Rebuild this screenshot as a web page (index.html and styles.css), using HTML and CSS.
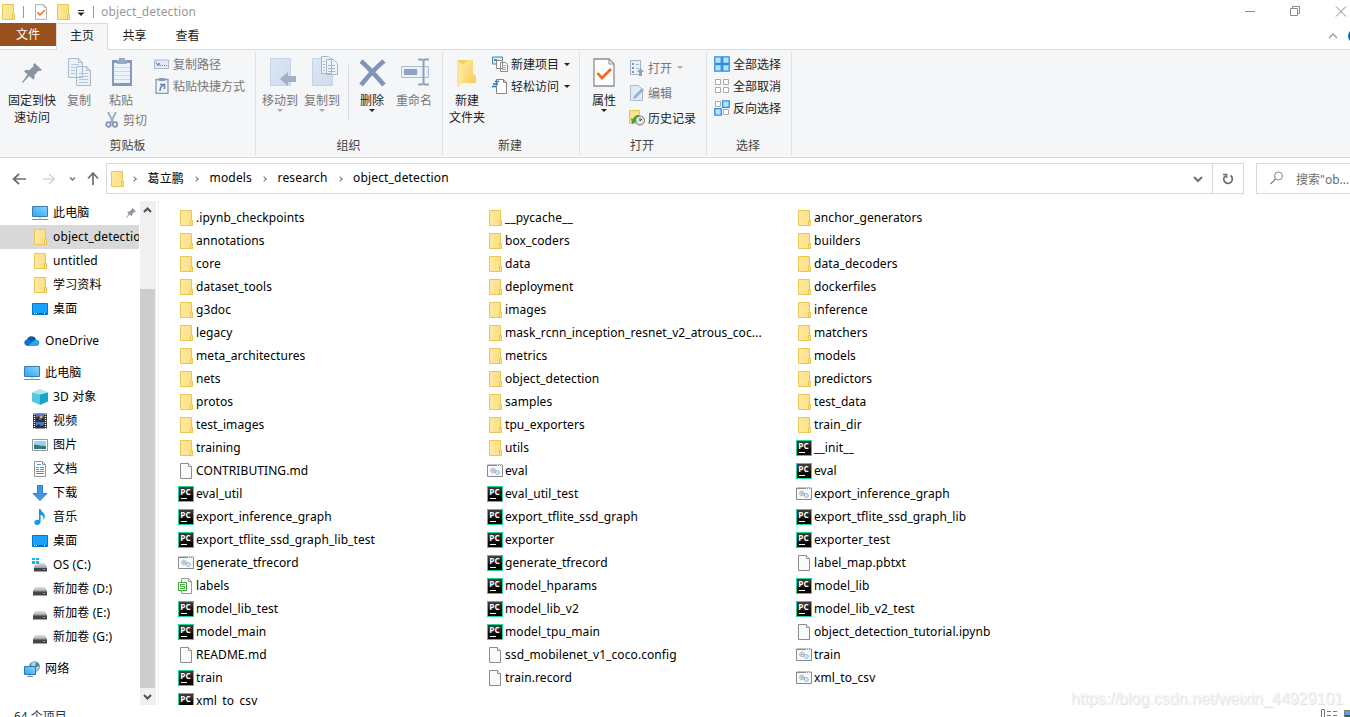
FILE: index.html
```html
<!DOCTYPE html>
<html lang="zh-CN">
<head>
    <meta charset="UTF-8">
    <meta name="viewport" content="width=device-width, initial-scale=1.0">
    <title>object_detection</title>
    <link rel="stylesheet" href="styles.css">
</head>
<body>
    <!-- Icon definitions -->
    <svg class="defs" width="0" height="0">
        <linearGradient id="g-folder"><stop offset="0" stop-color="#ffe99f"/><stop offset="1" stop-color="#fddf83"/></linearGradient>
        <linearGradient id="g-screen" x1="0" y1="1" x2="1" y2="0"><stop offset="0" stop-color="#28a5f5"/><stop offset="1" stop-color="#8ad4fd"/></linearGradient>
        <linearGradient id="g-pc" x2="0" y2="1"><stop offset="0" stop-color="#414141"/><stop offset=".7" stop-color="#050505"/></linearGradient>
        <linearGradient id="g-disk" x2="0" y2="1"><stop offset="0" stop-color="#e2e2e4"/><stop offset="1" stop-color="#aaaab0"/></linearGradient>
        <linearGradient id="g-big" x2="1" y2="1"><stop offset="0" stop-color="#ffe69b"/><stop offset="1" stop-color="#f7cf61"/></linearGradient>
        <linearGradient id="g-fade" x2="1" y2="1"><stop offset="0" stop-color="#dde8f5"/><stop offset="1" stop-color="#cddbed"/></linearGradient>
        <symbol id="folder" viewBox="0 0 16 16"><path d="M2.500.5h11v10h1v5h-12z" fill="url(#g-folder)" stroke="#e9c755"/><path d="M12.500 15v-4.500h2v5h-2z" fill="#ffe28a" stroke="#e9c755"/></symbol>
        <symbol id="file" viewBox="0 0 16 16"><path d="M2.500.5h8l3 3v12h-11z" fill="#fafafa" stroke="#8c8c8c"/><path d="M10.500.5v3h3" fill="#fff" stroke="#8c8c8c"/></symbol>
        <symbol id="py" viewBox="0 0 16 16"><path d="M0 0h16v16H0z" fill="#22d794"/><path d="M1 1h14v14H1z" fill="url(#g-pc)"/><text x="2.300" y="8.700" font-family="Open Sans" font-size="8.500" font-weight="700" fill="#fff" textLength="10.500" lengthAdjust="spacingAndGlyphs">PC</text><path d="M3 12h6v1H3z" fill="#fff"/></symbol>
        <symbol id="bat" viewBox="0 0 16 16"><path d="M.5 2h15v11.500H.5z" fill="#f7f9fb" stroke="#878b90"/><path d="M1 2h14v1H1z" fill="#878b90"/><path d="M10 2.500h1m1 0h1m1 0h.7" stroke="#fff"/><circle cx="6" cy="7.500" r="2.300" fill="#dfe3e8" stroke="#8e9aa5" stroke-dasharray="1.200 .5"/><circle cx="6" cy="7.500" r=".7" fill="#737f89"/><circle cx="10.300" cy="9.500" r="2" fill="#d4e9f7" stroke="#76a8ca" stroke-dasharray="1.200 .5"/></symbol>
        <symbol id="sheet" viewBox="0 0 16 16"><path d="M3.500.5h7l3 3v12h-10z" fill="#fff" stroke="#999"/><path d="M10.500.5v3h3" fill="none" stroke="#999"/><path d="M.5 4.500h8v8h-8z" fill="#fff" stroke="#39a935"/><path d="M6.800 6.500H2.500v2h4v2H2" fill="none" stroke="#39a935"/></symbol>
        <symbol id="pc" viewBox="0 0 16 16"><path d="M.5 1.500h15v10H.5z" fill="url(#g-screen)" stroke="#3b7daa"/><path d="M6.500 12h3v1.500h-3z" fill="#c9d6e2"/><path d="M0 14.500h16" stroke="#8495a6"/></symbol>
        <symbol id="desktop" viewBox="0 0 16 16"><path d="M.5 2.500h15v11H.5z" fill="#18a0fb" stroke="#0b76c5"/><path d="M1 12.500h14" stroke="#0b5c9f"/><path d="M2 12.500h1m1 0h1m7 0h1" stroke="#fff"/></symbol>
        <symbol id="cloud" viewBox="0 0 16 16"><path d="M3 7.500a4.700 4.700 0 0 1 9-1.500L9 11z" fill="#0a58a8"/><path d="M3.500 13a3.400 3.400 0 1 1 2-6.300L12 13z" fill="#0d73ce"/><path d="M9 8.200a3.800 3.800 0 0 1 4-1.400A3.200 3.200 0 0 1 13 13H4z" fill="#28a8ea"/></symbol>
        <symbol id="cube" viewBox="0 0 16 16"><path d="M0 3.500 8 0l8 3.500-8 2z" fill="#a4e8f3"/><path d="M0 3.500 8 5.500V16l-8-3.500z" fill="#5bc5d9"/><path d="M16 3.500 8 5.500V16l8-3.500z" fill="#14a5c8"/></symbol>
        <symbol id="video" viewBox="0 0 16 16"><path d="M1 .5h14v15H1z" fill="#333"/><path d="M2.500 1v15M13.500 1v15" stroke="#fff" stroke-width="1.300" stroke-dasharray="1 1"/><path d="M4 1h8v6H4zm0 8h8v6H4z" fill="#4777c8"/><path d="M4 5l3-2 2 2 3-1v3H4zm0 8 3-2 2 2 3-1v3H4z" fill="#203052"/><circle cx="9" cy="4" r="1.500" fill="#e7b431"/><circle cx="8" cy="6" r="1" fill="#cf463b"/></symbol>
        <symbol id="image" viewBox="0 0 16 16"><path d="M.5 2.500h15v11H.5z" fill="#fff" stroke="#8f979f"/><path d="M2 4h12v8H2z" fill="#9bd1f5"/><path d="M2 8c4-1 5 1 12 1v3H2z" fill="#367a78"/></symbol>
        <symbol id="doc" viewBox="0 0 16 16"><path d="M2.500.5h8l3 3v12h-11z" fill="#fff" stroke="#8e979f"/><path d="M10.500.5v3h3" fill="none" stroke="#8e979f"/><path d="M5 3.500h4M4 6.500h3m1 0h4m-8 2h3m1 0h4m-8 2h8m-8 2h8" stroke="#3a9ae2"/></symbol>
        <symbol id="down" viewBox="0 0 16 16"><path d="M5.500.5h5v8h4.500L8 15.500 1 8.500h4.500z" fill="#3f97e4" stroke="#2c7fc9"/></symbol>
        <symbol id="music" viewBox="0 0 16 16"><path d="M7 0h1.600c.3 3 5 4 4.200 8-.2 1.400-1 2.300-1.600 2.700 1-3-.8-4.500-2.600-5V12c0 3-2 4-3.700 4-3 0-3.500-4-.5-5 1-.3 2-.2 2.600.2z" fill="#1297ec"/></symbol>
        <symbol id="disk" viewBox="0 0 16 16"><path d="M3.500 6h9L15 10H1z" fill="url(#g-disk)"/><path d="M1 10h14v4.500H1z" fill="#41454a"/><path d="M1 10h14" stroke="#999"/><path d="M11 12.500h2" stroke="#33dd50"/></symbol>
        <symbol id="osdisk" viewBox="0 0 16 16"><path d="M4 6h8.500L15 10H2z" fill="url(#g-disk)"/><path d="M2 10.500h13v4H2z" fill="#41454a"/><path d="M11 12.500h2" stroke="#33dd50"/><path d="M-.5.5h7v7h-7z" fill="#fff"/><path d="M0 1h3v2H0zm4 0h3v2H4zM0 4h3v3H0zm4 0h3v3H4z" fill="#13b5ef"/></symbol>
        <symbol id="net" viewBox="0 0 16 16"><circle cx="10.500" cy="5.500" r="5.300" fill="#4286b4"/><path d="M7 3c2-3 4-3 5-1l-1 3-3 1zM12 6l3-1c0 3-1 4-3 5z" fill="#add2e3"/><path d="M.5 5.500h11v8H.5z" fill="url(#g-screen)" stroke="#2d77aa"/><path d="M3 15.500h6M6 14v2" stroke="#7f95a5"/></symbol>
        <symbol id="pin" viewBox="0 0 20 20"><path d="m12.500 0 7.500 7-2 1-1.500-.3-4 4.300c.3 2 0 3.500-1 4.700L7.200 13 .8 20l-.8-.8L5.500 11.500 2 8.200c1.500-1.300 3-1.300 5-1l4.500-4-.3-1.500z" fill="#8995a1"/></symbol>
        <symbol id="check" viewBox="0 0 22 29"><path d="M1 1h15l5 5v22H1z" fill="#fff" stroke="#8d8d8d" stroke-width="1.300"/><path d="M16 1v5h5" fill="none" stroke="#8d8d8d"/><path d="m4.500 15 4.500 5 9-9" fill="none" stroke="#f26419" stroke-width="2.600"/></symbol>
    </svg>

    <div class="window">
        <!-- Title Bar -->
        <div class="titlebar">
            <svg class="ico title-folder"><use href="#folder"/></svg>
            <span class="bar"></span>
            <svg class="title-check"><use href="#check"/></svg>
            <svg class="ico"><use href="#folder"/></svg>
            <svg class="title-more" viewBox="0 0 8 6"><path d="M1 .5h6" stroke="#222"/><path d="M.5 2.500h7L4 6z" fill="#222"/></svg>
            <span class="bar"></span>
            <span class="title">object_detection</span>
            <svg class="controls" viewBox="0 0 110 22"><path d="M5 10.500h10M50.500 7.500h7v7h-7zM52.500 7V5.500h7v7H58M96 5.500l10 10m0-10-10 10" fill="none" stroke="#8a8a8a"/></svg>
        </div>

        <!-- Tabs -->
        <div class="tabs">
            <div class="tab file">文件</div>
            <div class="tab active">主页</div>
            <div class="tab">共享</div>
            <div class="tab">查看</div>
            <svg class="help" viewBox="0 0 24 16"><path d="m3 10 4-4 4 4" fill="none" stroke="#999" stroke-width="1.400"/><circle cx="29" cy="8" r="7" fill="#1468b3"/></svg>
        </div>

        <!-- Ribbon -->
        <div class="ribbon">
            <div class="group clipboard">
                <div class="tools">
                    <div class="big pin-btn"><svg viewBox="0 0 32 32"><use href="#pin" x="6" y="7" width="20" height="20"/></svg>固定到快<br>速访问</div>
                    <div class="big copy off"><svg viewBox="0 0 32 32"><path d="M5.500 2.500h10l4 4v15h-14zM13.500 10.500h10l4 4v15h-14z" fill="#eaf1f9" stroke="#a9b9cf"/><path d="M15.500 2.500v4h4M23.500 10.500v4h4" fill="none" stroke="#a9b9cf"/><path d="M8 8.500h8M8 11.500h4M8 14.500h4M8 17.500h4M16 17.500h9M16 20.500h9M16 23.500h9M16 26.500h9" stroke="#b2c5dd"/></svg>复制</div>
                    <div class="paste-col off">
                        <div class="big"><svg viewBox="0 0 32 32"><path d="M7 4h20v26H7z" fill="#8799b8"/><path d="M9 7h16v20H9z" fill="#edf3fa"/><path d="M12 4h2V2h6v2h2v4H12z" fill="#9caac1"/><path d="M9 11.500h16m-16 4h16m-16 4h16m-16 4h16" stroke="#cad8ea"/></svg>粘贴</div>
                        <div class="small cut"><svg viewBox="0 0 16 16"><path d="m4 0 5.500 11M12 0 6.500 11" stroke="#96a8c0" stroke-width="1.700"/><circle cx="4.500" cy="12.500" r="2.300" fill="none" stroke="#8294b0" stroke-width="1.700"/><circle cx="11" cy="12.500" r="2.300" fill="none" stroke="#8294b0" stroke-width="1.700"/></svg>剪切</div>
                    </div>
                    <div class="stack off">
                        <div class="small"><svg viewBox="0 0 16 16"><path d="M.5 4h14v8.500H.5z" fill="#e3ebf5" stroke="#a7b8d0"/><path d="m2 6 2 4 1-3 1.500 3M8 9.500h1m1 0h1m1 0h1" fill="none" stroke="#7185a5"/></svg>复制路径</div>
                        <div class="small"><svg viewBox="0 0 16 16"><path d="M2 1.500h12v14H2z" fill="#edf3fa" stroke="#899ab6" stroke-width="1.300"/><path d="M5 0h6v3H5z" fill="#899ab6"/><path d="M6 6.500h4.500V11M10.500 6.500Q6 8 6 13" fill="none" stroke="#6e83a5" stroke-width="1.600"/></svg>粘贴快捷方式</div>
                    </div>
                </div>
                <div class="label">剪贴板</div>
            </div>

            <div class="group organize">
                <div class="tools">
                    <div class="big off"><svg viewBox="0 0 32 32"><path d="M6.500 2.500h20v27h-20z" fill="url(#g-fade)" stroke="#c5d4e8"/><path d="m16 23 8-7v4h8v6h-8v4z" fill="#a1b0c8"/></svg>移动到<i class="arrow"></i></div>
                    <div class="big off"><svg viewBox="0 0 32 32"><path d="M6.500 2.500h20v27h-20z" fill="url(#g-fade)" stroke="#c5d4e8"/><path d="M15.500.5h7l3 3v14h-10zM20.500 3.500h7l4 4v11h-11z" fill="#eef4fb" stroke="#a5b5cc"/><path d="M17 5.500h2m-2 3h2m-2 3h2m-2 3h2M22 9.500h7m-7 3h7m-7 3h7" stroke="#a5b5cc"/></svg>复制到<i class="arrow"></i></div>
                    <span class="divider"></span>
                    <div class="big del"><svg viewBox="0 0 32 32"><path d="M5 5q10 9 23 24M28 5Q17 14 5 29" fill="none" stroke="#8294b5" stroke-width="4.500"/></svg>删除<i class="arrow"></i></div>
                    <div class="big off rename"><svg viewBox="0 0 32 32"><path d="M3.500 10.500h27v11h-27z" fill="#eaf2fc" stroke="#a9bad2"/><path d="M6 13h13v6H6z" fill="#8fa3c1"/><path d="M20 3.500h4l1.500 1L27 3.500h4M25.500 4v24M20 28.500h4l1.500-1 1.500 1h4" fill="none" stroke="#8fa0ba" stroke-width="2"/></svg>重命名</div>
                </div>
                <div class="label">组织</div>
            </div>

            <div class="group new">
                <div class="tools">
                    <div class="big"><svg viewBox="0 0 32 32"><path d="M6 4h16v14l3 2v7H6z" fill="#f6cf67"/><path d="M6 4c3 3 6 3 6 7v15l-5 5H6z" fill="#ffe398"/><path d="M12 9 17 4h5v14l3 2v7H12z" fill="url(#g-big)"/></svg>新建<br>文件夹</div>
                    <div class="stack">
                        <div class="small"><svg viewBox="0 0 16 16"><path d="M.5 1h10v7H.5z" fill="#d8edf8" stroke="#4687aa"/><path d="M2 3h3v2H2z" fill="#4a93b8"/><path d="M4.500 4.500h6v8h-6zM8.500 6.500h5l2 2v7h-7z" fill="#fff" stroke="#888"/><path d="M10 9.500h4m-4 2h4" stroke="#ee8c83"/><path d="M10 13.500h4" stroke="#76a5da"/></svg>新建项目<i class="arrow"></i></div>
                        <div class="small"><svg viewBox="0 0 16 16"><path d="M4.500 1.500h7l3 3v11h-10z" fill="#fff" stroke="#858585"/><path d="M11.500 1.500v3h3" fill="none" stroke="#858585"/><path d="M3 3.500h4M1 6h5M0 8.500h4" stroke="#1979ca" stroke-width="1.300"/></svg>轻松访问<i class="arrow"></i></div>
                    </div>
                </div>
                <div class="label">新建</div>
            </div>

            <div class="group open">
                <div class="tools">
                    <div class="big props"><svg viewBox="0 0 32 32"><use href="#check" x="5" y="2" width="22" height="29"/></svg>属性<i class="arrow"></i></div>
                    <div class="stack">
                        <div class="small off"><svg viewBox="0 0 16 16"><path d="M1.500.5h10v14h-10z" fill="#e8f0f9" stroke="#9fb1ca"/><path d="M3 3h2v2H3zm0 4h2v2H3zm0 4h2v2H3z" fill="#8297b8"/><path d="M7 4.500h3M7 8.500h3" stroke="#a4b5cc"/><path d="m8 12 3.500-4 3.500 4h-2v4h-3v-4z" fill="#8fa2bf"/></svg>打开<i class="arrow"></i></div>
                        <div class="small off"><svg viewBox="0 0 16 16"><path d="M1.500.5h8l4 4v11h-12z" fill="#dfeaf7" stroke="#a9bcd5"/><path d="m4 14 1-3 8-8 2 2-8 8z" fill="#9db0ca"/></svg>编辑</div>
                        <div class="small"><svg viewBox="0 0 16 16"><path d="M.5.5h10v13H.5z" fill="#ffe28b" stroke="#e3c457"/><circle cx="11" cy="10.500" r="4.500" fill="#e4e4e4" stroke="#777"/><path d="M11 8v3l2-2" fill="none" stroke="#444"/><path d="M10 5c-4 0-5 2-6 4L2 8l1 6 5-3-2-1c1-2 2-3 4-3z" fill="#32ad35"/></svg>历史记录</div>
                    </div>
                </div>
                <div class="label">打开</div>
            </div>

            <div class="group select">
                <div class="tools">
                    <div class="stack">
                        <div class="small"><svg viewBox="0 0 16 16"><path d="M.8.8h6.500v6.500H.8zm7.900 0h6.500v6.500H8.700zM.8 8.700h6.500v6.500H.8zm7.900 0h6.500v6.500H8.700z" fill="#b9e2fc" stroke="#2a8fdf" stroke-width="1.300"/></svg>全部选择</div>
                        <div class="small"><svg viewBox="0 0 16 16"><path d="M1.500 1.500h5v5h-5zm8 0h5v5h-5zm-8 8h5v5h-5zm8 0h5v5h-5z" fill="#fff" stroke="#aaa"/></svg>全部取消</div>
                        <div class="small"><svg viewBox="0 0 16 16"><path d="M1.500 1.500h5v5h-5zm8 8h5v5h-5z" fill="#fff" stroke="#aaa"/><path d="M8.700.8h6.500v6.500H8.700zM.8 8.700h6.500v6.500H.8z" fill="#b9e2fc" stroke="#2a8fdf" stroke-width="1.300"/></svg>反向选择</div>
                    </div>
                </div>
                <div class="label">选择</div>
            </div>
        </div>

        <!-- Address Bar -->
        <div class="address">
            <svg class="nav" viewBox="0 0 106 31"><path d="M14 16h12M19 11l-5.500 5 5.500 5M93 22V11M88 15.500l5-5.500 5 5.500" fill="none" stroke="#6d6d6d" stroke-width="1.700"/><path d="M43 16h11M49 11l5.500 5-5.500 5" fill="none" stroke="#d4d4d4" stroke-width="1.500"/><path d="m70 14.500 2.500 2.500 2.500-2.500" fill="none" stroke="#777" stroke-width="1.500"/></svg>
            <div class="path">
                <svg class="ico"><use href="#folder"/></svg>
                <i class="chev"></i><span>葛立鹏</span>
                <i class="chev"></i><span>models</span>
                <i class="chev"></i><span>research</span>
                <i class="chev"></i><span>object_detection</span>
                <svg class="drop" viewBox="0 0 10 8"><path d="m1 2 4 4 4-4" fill="none" stroke="#707070" stroke-width="2"/></svg>
            </div>
            <div class="refresh"><svg viewBox="0 0 12 12"><path d="M8.500 2.500A4.300 4.300 0 1 1 3 3M1 1.500h3.500V5" fill="none" stroke="#6a6a6a" stroke-width="1.700"/></svg></div>
            <div class="search">
                <svg viewBox="0 0 14 14"><circle cx="8.500" cy="5" r="4" fill="none" stroke="#858585"/><path d="m5.500 8-5 5" stroke="#858585" stroke-width="1.200"/></svg>
                <span>搜索"ob...</span>
            </div>
        </div>

        <!-- Sidebar + files -->
        <div class="main">
            <div class="sidebar" id="sidebar"></div>
            <div class="scrollbar">
                <svg viewBox="0 0 16 17"><path d="m4 11 3.500-3.500L11 11" fill="none" stroke="#505050" stroke-width="2"/></svg>
                <div class="thumb"></div>
                <svg viewBox="0 0 16 17"><path d="m4 7 3.500 3.500L11 7" fill="none" stroke="#505050" stroke-width="2"/></svg>
            </div>
            <div class="files" id="files"></div>
        </div>

        <!-- Status Bar -->
        <div class="status">
            <span class="count">64 个项目</span>
            <svg class="views" viewBox="0 0 30 10"><path d="M1.500 1.500h3v8h-3zM7 3.500h4m2 0h4M7 7.500h4m2 0h4" fill="none" stroke="#777"/><path d="M24.500 2.500h9v8h-9z" fill="#5aa2e4" stroke="#777"/><path d="M25 7h5v3h-5z" fill="#32664b"/></svg>
        </div>
        <div class="watermark">https://blog.csdn.net/weixin_44929101</div>
    </div>

    <script>
        const sidebarItems = [
            ['pc', '此电脑', 'sub pinned'], ['folder', 'object_detection', 'sub selected'], ['folder', 'untitled', 'sub'],
            ['folder', '学习资料', 'sub'], ['desktop', '桌面', 'sub'],
            ['cloud', 'OneDrive', 'root'], ['pc', '此电脑', 'root'],
            ['cube', '3D 对象', 'sub'], ['video', '视频', 'sub'], ['image', '图片', 'sub'], ['doc', '文档', 'sub'],
            ['down', '下载', 'sub'], ['music', '音乐', 'sub'], ['desktop', '桌面', 'sub'], ['osdisk', 'OS (C:)', 'sub'],
            ['disk', '新加卷 (D:)', 'sub'], ['disk', '新加卷 (E:)', 'sub'], ['disk', '新加卷 (G:)', 'sub'],
            ['net', '网络', 'root']
        ];

        const folders = ['.ipynb_checkpoints', '__pycache__', 'anchor_generators', 'annotations', 'box_coders', 'builders',
            'core', 'data', 'data_decoders', 'dataset_tools', 'deployment', 'dockerfiles', 'g3doc', 'images', 'inference',
            'legacy', 'mask_rcnn_inception_resnet_v2_atrous_coc...', 'matchers', 'meta_architectures', 'metrics', 'models',
            'nets', 'object_detection', 'predictors', 'protos', 'samples', 'test_data', 'test_images', 'tpu_exporters',
            'train_dir', 'training', 'utils'];

        const files = [
            ['py', '__init__'],
            ['file', 'CONTRIBUTING.md'], ['bat', 'eval'], ['py', 'eval'],
            ['py', 'eval_util'], ['py', 'eval_util_test'], ['bat', 'export_inference_graph'],
            ['py', 'export_inference_graph'], ['py', 'export_tflite_ssd_graph'], ['py', 'export_tflite_ssd_graph_lib'],
            ['py', 'export_tflite_ssd_graph_lib_test'], ['py', 'exporter'], ['py', 'exporter_test'],
            ['bat', 'generate_tfrecord'], ['py', 'generate_tfrecord'], ['file', 'label_map.pbtxt'],
            ['sheet', 'labels'], ['py', 'model_hparams'], ['py', 'model_lib'],
            ['py', 'model_lib_test'], ['py', 'model_lib_v2'], ['py', 'model_lib_v2_test'],
            ['py', 'model_main'], ['py', 'model_tpu_main'], ['file', 'object_detection_tutorial.ipynb'],
            ['file', 'README.md'], ['file', 'ssd_mobilenet_v1_coco.config'], ['bat', 'train'],
            ['py', 'train'], ['file', 'train.record'], ['bat', 'xml_to_csv'],
            ['py', 'xml_to_csv']
        ];

        function icon(name, cls) {
            return `<svg class="${cls}"><use href="#${name}"/></svg>`;
        }

        document.getElementById('sidebar').innerHTML = sidebarItems.map(([type, name, cls]) =>
            `<div class="item ${cls}">${icon(type, 'ico')}<span>${name}</span>${cls.includes('pinned') ? icon('pin', 'pin') : ''}</div>`
        ).join('');

        document.getElementById('files').innerHTML = folders.map(name => ['folder', name]).concat(files).map(([type, name]) =>
            `<div class="entry">${icon(type, 'ico')}<span>${name}</span></div>`
        ).join('');
    </script>
</body>
</html>
```
FILE: styles.css
```css
* {
    box-sizing: border-box;
    margin: 0;
    padding: 0;
}

body {
    font-family: 'Noto Sans', 'Noto Sans CJK SC', sans-serif;
    font-size: 12px;
    color: #000;
    background: #fff;
    overflow: hidden;
}

svg {
    flex: none;
    display: block;
}

.defs {
    position: absolute;
}

.window {
    height: 717px;
    display: flex;
    flex-direction: column;
    overflow: hidden;
    position: relative;
}

.ico {
    width: 16px;
    height: 16px;
}

/* Title Bar */
.titlebar {
    height: 23px;
    display: flex;
    align-items: center;
    flex: none;
}

.title-folder {
    margin-right: 7px;
}

.titlebar .bar {
    width: 1px;
    height: 12px;
    background: #999;
}

.title-check {
    width: 12px;
    height: 16px;
    margin: 0 8px 0 11px;
}

.title-more {
    width: 8px;
    height: 6px;
    margin: 3px 8px 0 6px;
}

.title {
    color: #999;
    margin-left: 7px;
    letter-spacing: 0.13px;
}

.controls {
    width: 110px;
    height: 22px;
    margin-left: auto;
}

/* Tabs */
.tabs {
    height: 27px;
    display: flex;
    flex: none;
    border-bottom: 1px solid #dadbdc;
}

.tab {
    width: 53px;
    height: 26px;
    line-height: 25px;
    text-align: center;
    color: #222;
}

.tab.file {
    width: 56px;
    height: 23px;
    line-height: 24px;
    background: #98501c;
    color: #fff;
}

.tab.active {
    width: 52px;
    height: 27px;
    line-height: 23px;
    background: #f5f6f7;
    border: 1px solid #dadbdc;
    border-bottom: none;
}

.help {
    width: 24px;
    height: 16px;
    margin: 5px 0 0 auto;
}

/* Ribbon */
.ribbon {
    height: 108px;
    display: flex;
    flex: none;
    background: #f5f6f7;
    border-bottom: 1px solid #dadbdc;
    color: #222;
}

.group {
    height: 103px;
    margin-top: 2px;
    border-right: 1px solid #e0e1e3;
    display: flex;
    flex-direction: column;
}

.clipboard { width: 256px; padding-left: 4px; }
.organize { width: 187px; padding-left: 3px; }
.new { width: 137px; padding-left: 2px; }
.open { width: 127px; padding-left: 2px; }
.select { width: 85px; padding-left: 7px; }

.tools {
    display: flex;
    height: 85px;
    padding-top: 4px;
}

.label {
    text-align: center;
    line-height: 17px;
    padding-right: 4px;
    color: #444;
}

.select .label {
    padding-right: 9px;
}

.big {
    display: flex;
    flex-direction: column;
    align-items: center;
    text-align: center;
    width: 42px;
    line-height: 17px;
    white-space: nowrap;
    flex: none;
}

.big svg {
    width: 32px;
    height: 32px;
    margin-bottom: 4px;
}

.pin-btn {
    width: 56px;
}

.copy {
    width: 38px;
}

.off {
    color: #777;
}

.paste-col {
    width: 56px;
}

.paste-col .big {
    width: 46px;
}

.stack {
    margin-top: -3px;
}

.small {
    display: flex;
    align-items: center;
    height: 22px;
    white-space: nowrap;
}

.small svg {
    width: 16px;
    height: 16px;
    margin-right: 3px;
}

.cut {
    height: 22px;
    margin-left: 6px;
}

.arrow {
    border: 3px solid transparent;
    border-top-color: #222;
    border-bottom: none;
}

.small .arrow {
    margin-left: 5px;
}

.off .arrow {
    border-top-color: #aaa;
}

.divider {
    width: 1px;
    height: 55px;
    margin: 9px 2px 0 5px;
    background: #dcdde0;
}

.rename {
    width: 42px;
}

.new .big {
    width: 44px;
    margin-right: 3px;
}

.props {
    width: 44px;
    margin-right: 3px;
}

.open .small {
    height: 25px;
}

.open .stack {
    margin-top: -1px;
}

/* Address Bar */
.address {
    height: 43px;
    padding-top: 5px;
    display: flex;
    flex: none;
}

.nav {
    width: 106px;
    height: 31px;
}

.path {
    width: 1107px;
    height: 31px;
    border: 1px solid #d9d9d9;
    display: flex;
    align-items: center;
    padding-left: 2px;
}

.path span {
    margin-right: 10px;
    padding-bottom: 2px;
    letter-spacing: 0.17px;
}

.chev {
    width: 4px;
    height: 4px;
    border: solid #777;
    border-width: 1.5px 1.5px 0 0;
    transform: rotate(45deg);
    margin: 0 11.5px 0 0;
}

.path .ico + .chev {
    margin-left: 7px;
}

.drop {
    width: 10px;
    height: 8px;
    margin: 0 9px 0 auto;
}

.refresh {
    width: 31px;
    height: 31px;
    border: 1px solid #d9d9d9;
    border-left: none;
    display: flex;
    align-items: center;
    justify-content: center;
}

.refresh svg {
    width: 12px;
    height: 12px;
}

.search {
    flex: 1;
    height: 31px;
    margin-left: 12px;
    border: 1px solid #d9d9d9;
    border-right: none;
    display: flex;
    align-items: center;
    color: #6d6d6d;
    white-space: nowrap;
    overflow: hidden;
}

.search svg {
    width: 14px;
    height: 14px;
    margin: 0 12px 2px 13px;
}

/* Main */
.main {
    height: 504px;
    display: flex;
    flex: none;
}

.sidebar {
    width: 140px;
    overflow: hidden;
}

.item {
    display: flex;
    align-items: center;
    height: 24px;
    width: 139px;
    padding-left: 32px;
    white-space: nowrap;
    overflow: hidden;
}

.item span {
    padding-bottom: 2px;
    letter-spacing: 0.13px;
}

.item .ico {
    margin-right: 5px;
}

.item.root {
    padding-left: 24px;
    margin-top: 8px;
}

.item.selected {
    background: #d9d9d9;
}

.item .pin {
    width: 10px;
    height: 10px;
    margin: 0 3px 0 auto;
}

.scrollbar {
    width: 16px;
    background: #f0f0f0;
    display: flex;
    flex-direction: column;
    justify-content: space-between;
}

.scrollbar svg {
    width: 16px;
    height: 17px;
}

.thumb {
    width: 15px;
    height: 399px;
    margin-top: auto;
    background: #cdcdcd;
}

.files {
    flex: 1;
    margin-left: 2px;
    border-left: 1px solid #f0f0f0;
    padding: 5px 0 0 19px;
    display: grid;
    grid-template-columns: repeat(3, 309px);
    grid-auto-rows: 23px;
    overflow: hidden;
}

.entry {
    display: flex;
    align-items: center;
    white-space: nowrap;
    letter-spacing: 0.08px;
}

.entry .ico {
    margin-right: 2px;
}

/* Status Bar */
.status {
    height: 12px;
    display: flex;
    justify-content: space-between;
    flex: none;
    overflow: hidden;
    color: #1e395b;
}

.count {
    line-height: 23px;
    margin-left: 14px;
}

.views {
    width: 30px;
    height: 10px;
    margin-top: 3px;
}

.watermark {
    position: absolute;
    right: 7px;
    bottom: 8px;
    font-family: 'Liberation Sans', sans-serif;
    font-size: 16px;
    line-height: 20px;
    color: #f4f4f4;
    text-shadow: 1px 1px 1px #ddd;
}
```
